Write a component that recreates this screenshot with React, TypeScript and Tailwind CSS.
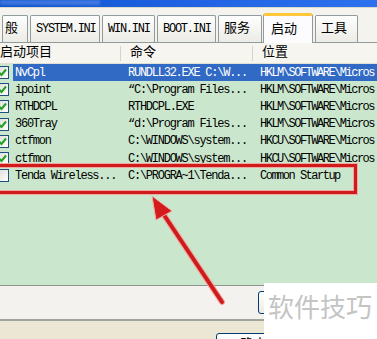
import React from "react";

const mono = { fontFamily: '"Liberation Mono", "Noto Sans CJK SC", monospace' };

const tabs = [
  { label: "般", w: "w-[26px]", pl: "pl-[2px]" },
  { label: "SYSTEM.INI", w: "w-[70px]", pl: "pl-[5px]" },
  { label: "WIN.INI", w: "w-[53px]", pl: "pl-[5px]" },
  { label: "BOOT.INI", w: "w-[59px]", pl: "pl-[5px]" },
  { label: "服务", w: "w-[44px]", pl: "pl-[5px]" },
  { label: "启动", w: "w-[50px]", pl: "pl-[7px]", active: true },
  { label: "工具", w: "w-[43px]", pl: "pl-[5px]" },
];

const rows = [
  { name: "NvCpl", cmd: "RUNDLL32.EXE C:\\W...", loc: "HKLM\\SOFTWARE\\Micros", on: true, sel: true },
  { name: "ipoint", cmd: "\u201CC:\\Program Files...", loc: "HKLM\\SOFTWARE\\Micros", on: true },
  { name: "RTHDCPL", cmd: "RTHDCPL.EXE", loc: "HKLM\\SOFTWARE\\Micros", on: true },
  { name: "360Tray", cmd: "\u201Cd:\\Program Files...", loc: "HKLM\\SOFTWARE\\Micros", on: true },
  { name: "ctfmon", cmd: "C:\\WINDOWS\\system...", loc: "HKCU\\SOFTWARE\\Micros", on: true },
  { name: "ctfmon", cmd: "C:\\WINDOWS\\system...", loc: "HKCU\\SOFTWARE\\Micros", on: true },
  { name: "Tenda Wireless...", cmd: "C:\\PROGRA~1\\Tenda...", loc: "Common Startup", on: false },
];

function Check({ on }: { on: boolean }) {
  return (
    <div className="w-[13px] h-[13px] ml-[-4px] border border-[#1c5180] bg-gradient-to-br from-[#dcdcd7] to-white flex items-center justify-center shrink-0">
      {on && (
        <svg width="9" height="9" viewBox="0 0 9 9">
          <path d="M1 4.5 L3.5 7 L8 1.5" fill="none" stroke="#21a121" strokeWidth="2" />
        </svg>
      )}
    </div>
  );
}

export default function App() {
  return (
    <div className="relative w-[377px] h-[339px] overflow-hidden bg-[#ece9d8] text-[12px] tracking-[-1.25px] text-black" style={mono}>
      {/* title bar */}
      <div className="h-[7px] bg-gradient-to-r from-[#0b53cf] via-[#1f63e2] to-[#2c72ee] flex items-start">
        <div className="w-[100px] h-[5px] bg-[#5b8ae4] opacity-60 blur-[1px]" />
      </div>
      <div className="h-[1px] bg-[#dcd9cc]" />

      {/* tabs */}
      <div className="h-[35px] bg-[#f4f3ee] flex items-end border-b border-[#919b9c]">
        {tabs.map((t, i) =>
          t.active ? (
            <div
              key={i}
              className={`${t.w} shrink-0 h-[30px] mb-[-1px] ml-[1px] bg-[#fcfcfe] border-x border-[#919b9c] border-t-[3px] border-t-[#ffc83c] rounded-t-[3px] flex items-center ${t.pl} text-[13px] tracking-normal`}
            >
              {t.label}
            </div>
          ) : (
            <div
              key={i}
              className={`${t.w} shrink-0 h-[27px] ml-[2px] bg-gradient-to-b from-[#fefefe] to-[#ecebe5] border-x border-t border-[#919b9c] rounded-t-[2px] flex items-center ${t.pl} ${t.label.length < 3 ? "text-[13px] tracking-normal" : ""}`}
            >
              {t.label}
            </div>
          )
        )}
      </div>

      {/* list header */}
      <div className="h-[21px] bg-[#f6f5f0] border-b border-[#e2e0d2] flex items-center text-[13px] tracking-normal">
        <div className="w-[121px] shrink-0 border-r border-[#d6d3c4] h-[15px] flex items-center">启动项目</div>
        <div className="w-[132px] shrink-0 pl-[9px] border-r border-[#d6d3c4] h-[15px] flex items-center">命令</div>
        <div className="pl-[9px]">位置</div>
      </div>

      {/* list body */}
      <div className="h-[221px] bg-[#cae7cd]">
        {rows.map((r, i) => (
          <div key={i} className="h-[17.2px] flex items-center whitespace-nowrap">
            <div className="w-[13px] shrink-0 flex items-center">
              <Check on={r.on} />
            </div>
            <div className={`flex items-center h-full flex-1 min-w-0 ${r.sel ? "bg-[#316ac5] text-white" : ""}`}>
              <div className="w-[108px] shrink-0 pl-[2px] overflow-hidden">{r.name}</div>
              <div className="w-[132px] shrink-0 pl-[7px] overflow-hidden">{r.cmd}</div>
              <div className="pl-[7px] shrink-0 tracking-[-1.5px]">{r.loc}</div>
            </div>
          </div>
        ))}
      </div>

      {/* lower panel */}
      <div className="h-[36px] bg-[#f3f2ee] border-t border-[#8f948f] border-b-2 border-b-[#a0a49c] pl-[258px] pt-[5px]">
        <div className="w-[60px] h-[23px] border border-[#003c74] rounded-[3px] bg-gradient-to-b from-white to-[#ecebe6]" />
      </div>
      <div className="bg-[#ebe7d4] h-[20px] pl-[216px] pt-[12px]">
        <div className="w-[75px] h-[23px] border border-[#003c74] rounded-[3px] bg-gradient-to-b from-white to-[#ecebe6] flex justify-center pt-[1px] text-[13px] tracking-normal">
          确定
        </div>
      </div>

      {/* red highlight box */}
      <div className="absolute left-[-10px] top-[164px] w-[367px] h-[30px] border-[3px] border-[#cf1b1b] shadow-[0_0_0_1px_#f0a8a0,inset_0_0_0_1px_#f0a8a0]" />

      {/* arrow */}
      <svg className="absolute left-0 top-0 pointer-events-none" width="377" height="339" viewBox="0 0 377 339">
        <line x1="222" y1="302" x2="160" y2="209" stroke="#f0a8a0" strokeWidth="6" strokeLinecap="round" />
        <line x1="222" y1="302" x2="160" y2="209" stroke="#cf1b1b" strokeWidth="4" strokeLinecap="round" />
        <polygon points="152,196 172,211 156,220" fill="#d41c1c" stroke="#f0a8a0" strokeWidth="1" />
      </svg>

      {/* watermark */}
      <div className="absolute left-[264px] top-[283px] w-[113px] h-[56px] bg-white flex items-start pt-[8px] pl-[4px]">
        <span className="text-[26px] tracking-[0px] text-[#c4c4c4] leading-none pt-[2px]" style={{ fontFamily: '"Noto Sans CJK SC", sans-serif' }}>
          软件技巧
        </span>
      </div>
    </div>
  );
}
